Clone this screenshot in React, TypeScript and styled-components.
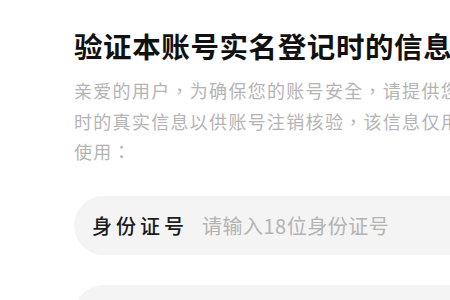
import styled, { createGlobalStyle } from "styled-components";

const GlobalStyle = createGlobalStyle`
  html, body {
    margin: 0;
    padding: 0;
    background: #ffffff;
    overflow: hidden;
  }

  body {
    font-family: "Noto Sans CJK SC", "Noto Sans", sans-serif;
  }
`;

interface Field {
  label: string;
  placeholder: string;
}

const fields: Field[] = [
  { label: "身份证号", placeholder: "请输入18位身份证号" },
  { label: "真实姓名", placeholder: "请输入真实姓名" },
];

function App() {
  return (
    <>
      <GlobalStyle />
      <Page>
        <Title>验证本账号实名登记时的信息</Title>
        <Intro>
          亲爱的用户，为确保您的账号安全，请提供您账号实名登记
          <br />
          时的真实信息以供账号注销核验，该信息仅用于注销核验
          <br />
          使用：
        </Intro>
        <Form>
          {fields.map((cur) => (
            <InputRow key={cur.label}>
              <Label>{cur.label}</Label>
              <Input placeholder={cur.placeholder} readOnly />
            </InputRow>
          ))}
        </Form>
      </Page>
    </>
  );
}

const Page = styled.div`
  width: 640px;
  height: 300px;

  padding: 29px 0 0 74px;

  display: flex;
  flex-direction: column;
`;

const Title = styled.h1`
  margin: 0;

  font-size: 28.5px;
  font-weight: 700;
  line-height: 1.2;
  letter-spacing: 0.6px;
  white-space: nowrap;

  color: #111111;
`;

const Intro = styled.p`
  margin: 12px 0 0 0;

  font-family: "Noto Sans CJK TC", "Noto Sans CJK SC", sans-serif;
  font-size: 18px;
  line-height: 30.5px;
  letter-spacing: 1.3px;
  white-space: nowrap;

  color: #b4b4b4;
`;

const Form = styled.div`
  margin-top: 29px;

  display: flex;
  flex-direction: column;
  gap: 30px;
`;

const InputRow = styled.label`
  width: 560px;
  height: 59px;

  padding-left: 18px;

  display: flex;
  flex-direction: row;
  align-items: center;
  gap: 14px;

  box-sizing: border-box;
  border-radius: 30px;
  background-color: #f4f4f4;
`;

const Label = styled.span`
  font-size: 20px;
  font-weight: 500;
  letter-spacing: 4px;
  white-space: nowrap;

  color: #1c1c1c;
`;

const Input = styled.input`
  flex: 1;

  padding: 0;

  border: none;
  outline: none;
  background: none;

  font-family: "Noto Sans CJK SC", "Noto Sans", sans-serif;
  font-size: 20px;
  letter-spacing: 0.5px;

  &::placeholder {
    color: #b3b3b3;
  }
`;

export default App;
